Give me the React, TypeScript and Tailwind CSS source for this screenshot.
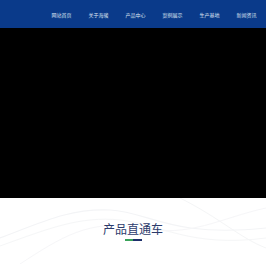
import React from "react";

const nav = ["网站首页", "关于海骏", "产品中心", "案例展示", "生产基地", "新闻资讯"];

export default function App() {
  return (
    <div className="w-[266px] h-[264px] overflow-hidden bg-white" style={{ fontFamily: '"Noto Sans CJK SC", "Noto Sans", sans-serif' }}>
      <header className="h-[28px] bg-[#0a3a8a] flex items-center justify-end pr-[9px]">
        <nav className="flex gap-[16px]">
          {nav.map((n) => (
            <span key={n} className="text-[5px] leading-none text-[#dfe6f3] w-[21px] text-center">{n}</span>
          ))}
        </nav>
      </header>
      <div className="h-[170px] bg-black" />
      <section className="relative h-[66px] bg-white flex flex-col items-center">
        <svg className="absolute inset-0" width="266" height="66" viewBox="0 0 266 66">
          <path d="M0 40 C40 25 70 10 110 12 C150 14 170 40 266 30" fill="none" stroke="#f3f4f6" strokeWidth="1.2" />
          <path d="M0 48 C50 30 80 18 120 22 C160 26 190 50 266 40" fill="none" stroke="#f5f6f7" strokeWidth="1" />
          <path d="M20 66 C60 40 90 20 140 30 C190 40 220 20 266 10" fill="none" stroke="#f6f6f8" strokeWidth="1" />
          <path d="M180 0 C220 20 240 40 266 50" fill="none" stroke="#f4f5f6" strokeWidth="1" />
        </svg>
        <h2 className="relative mt-[25px] text-[12px] leading-none font-normal text-[#2c3b6c]">产品直通车</h2>
        <div className="relative mt-[4px] flex h-[2px]">
          <div className="w-[8px] bg-[#3aa35a]" />
          <div className="w-[9px] bg-[#1d2f6b]" />
        </div>
      </section>
    </div>
  );
}
